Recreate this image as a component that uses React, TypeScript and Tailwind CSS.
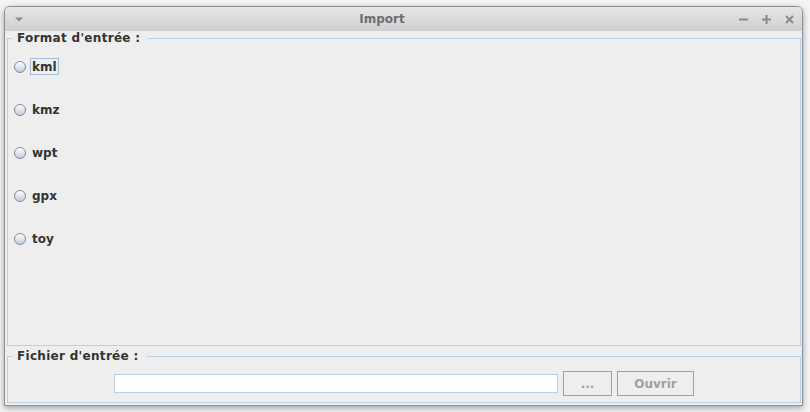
import React, { useState } from 'react';

const formats = ['kml', 'kmz', 'wpt', 'gpx', 'toy'];

// Petit bouton radio façon Metal (Java Swing)
function RadioDot() {
  return (
    <span className="inline-block w-[12px] h-[12px] rounded-full border border-[#7f8b99] bg-gradient-to-b from-[#ffffff] to-[#c2cfdd] shrink-0" />
  );
}

function TitleBar() {
  return (
    <div className="h-[24px] flex items-center bg-gradient-to-b from-[#e6e6e6] to-[#cfcfcf] rounded-t-[5px] shrink-0">
      <div className="w-[26px] pl-[10px] flex items-center">
        <svg width="8" height="5" viewBox="0 0 8 5">
          <path d="M0 0.5 L8 0.5 L4 4.5 Z" fill="#8a8a8a" />
        </svg>
      </div>
      <div className="flex-1 text-center text-[12px] font-bold text-[#6d6d6d] pr-[6px]">Import</div>
      <div className="flex items-center gap-[14px] pr-[8px]">
        <svg width="9" height="9" viewBox="0 0 9 9">
          <rect x="0" y="3.5" width="9" height="2" fill="#8a8a8a" />
        </svg>
        <svg width="9" height="9" viewBox="0 0 9 9">
          <rect x="0" y="3.5" width="9" height="2" fill="#8a8a8a" />
          <rect x="3.5" y="0" width="2" height="9" fill="#8a8a8a" />
        </svg>
        <svg width="9" height="9" viewBox="0 0 9 9">
          <path d="M1 1 L8 8 M8 1 L1 8" stroke="#8a8a8a" strokeWidth="2" />
        </svg>
      </div>
    </div>
  );
}

export default function App() {
  const [selected] = useState<string | null>(null);

  return (
    <div
      className="w-[810px] h-[412px] bg-[#f4f4f4] pt-[6px] pl-[4px] overflow-hidden text-[#333] select-none"
      style={{ fontFamily: '"DejaVu Sans", "Liberation Sans", sans-serif' }}
    >
      <div className="w-[799px] h-[400px] border border-[#8f8f8f] rounded-t-[6px] bg-[#eeeeee] flex flex-col shadow-[0_2px_6px_rgba(0,0,0,0.35)]">
        <TitleBar />

        <div className="flex-1 flex flex-col pl-[2px] pr-[1px]">
          {/* Format d'entrée */}
          <fieldset className="h-[315px] border border-[#b8cfe5] flex flex-col">
            <legend className="ml-[4px] pl-[5px] pr-[8px] text-[12px] font-bold leading-[14px] tracking-[0.3px]">Format d'entrée :</legend>
            <div className="flex flex-col gap-[26px] pt-[13px] pl-[6px]">
              {formats.map((f, i) => (
                <label key={f} className="h-[17px] flex items-center gap-[4px]">
                  <RadioDot />
                  <span
                    className={`h-[17px] flex items-center px-[1px] border text-[12px] font-bold ${
                      i === 0 ? 'border-[#a3bdd8]' : 'border-transparent'
                    } ${selected === f ? 'text-black' : ''}`}
                  >
                    {f}
                  </span>
                </label>
              ))}
            </div>
          </fieldset>

          {/* Fichier d'entrée */}
          <fieldset className="mt-[3px] h-[54px] border border-[#b8cfe5] flex flex-col">
            <legend className="ml-[4px] pl-[5px] pr-[8px] text-[12px] font-bold leading-[14px] tracking-[0.3px]">Fichier d'entrée :</legend>
            <div className="flex items-center justify-center gap-[5px] pt-[8px]">
              <input
                type="text"
                className="w-[444px] h-[19px] bg-white border border-[#b8cfe5] outline-none"
              />
              <button
                disabled
                className="w-[49px] h-[25px] border border-[#a0a0a0] bg-[#eeeeee] text-[12px] font-bold text-[#a0a0a0]"
              >
                ...
              </button>
              <button
                disabled
                className="w-[77px] h-[25px] border border-[#a0a0a0] bg-[#eeeeee] text-[12px] font-bold text-[#a0a0a0]"
              >
                Ouvrir
              </button>
            </div>
          </fieldset>
        </div>
      </div>
    </div>
  );
}
